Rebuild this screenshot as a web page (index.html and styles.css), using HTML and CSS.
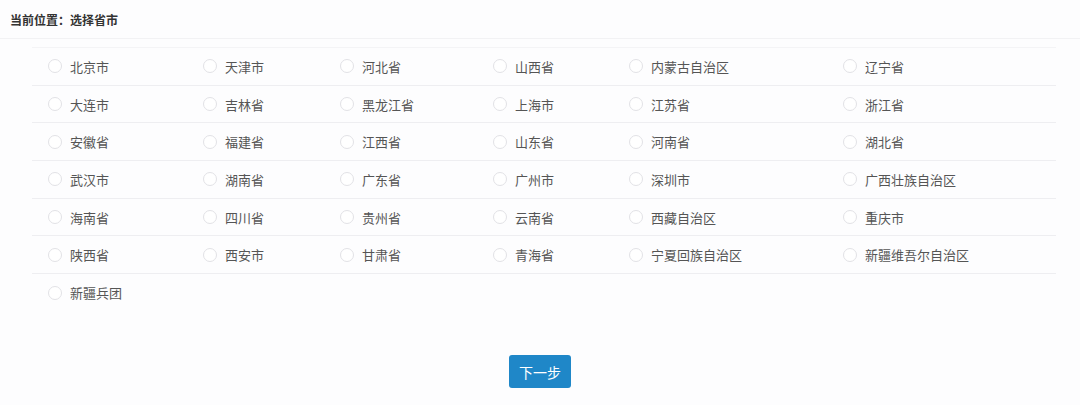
FILE: index.html
```html
<!DOCTYPE html>
<html lang="zh-CN">
<head>
    <meta charset="UTF-8">
    <meta name="viewport" content="width=device-width, initial-scale=1.0">
    <title>选择省市</title>
    <link rel="stylesheet" href="styles.css">
</head>
<body>
    <!-- Breadcrumb -->
    <div class="crumb">当前位置：选择省市</div>

    <!-- Province list -->
    <table class="area-table">
        <tr>
            <td><label><span class="radio"></span>北京市</label></td>
            <td><label><span class="radio"></span>天津市</label></td>
            <td><label><span class="radio"></span>河北省</label></td>
            <td><label><span class="radio"></span>山西省</label></td>
            <td><label><span class="radio"></span>内蒙古自治区</label></td>
            <td><label><span class="radio"></span>辽宁省</label></td>
        </tr>
        <tr>
            <td><label><span class="radio"></span>大连市</label></td>
            <td><label><span class="radio"></span>吉林省</label></td>
            <td><label><span class="radio"></span>黑龙江省</label></td>
            <td><label><span class="radio"></span>上海市</label></td>
            <td><label><span class="radio"></span>江苏省</label></td>
            <td><label><span class="radio"></span>浙江省</label></td>
        </tr>
        <tr>
            <td><label><span class="radio"></span>安徽省</label></td>
            <td><label><span class="radio"></span>福建省</label></td>
            <td><label><span class="radio"></span>江西省</label></td>
            <td><label><span class="radio"></span>山东省</label></td>
            <td><label><span class="radio"></span>河南省</label></td>
            <td><label><span class="radio"></span>湖北省</label></td>
        </tr>
        <tr>
            <td><label><span class="radio"></span>武汉市</label></td>
            <td><label><span class="radio"></span>湖南省</label></td>
            <td><label><span class="radio"></span>广东省</label></td>
            <td><label><span class="radio"></span>广州市</label></td>
            <td><label><span class="radio"></span>深圳市</label></td>
            <td><label><span class="radio"></span>广西壮族自治区</label></td>
        </tr>
        <tr>
            <td><label><span class="radio"></span>海南省</label></td>
            <td><label><span class="radio"></span>四川省</label></td>
            <td><label><span class="radio"></span>贵州省</label></td>
            <td><label><span class="radio"></span>云南省</label></td>
            <td><label><span class="radio"></span>西藏自治区</label></td>
            <td><label><span class="radio"></span>重庆市</label></td>
        </tr>
        <tr>
            <td><label><span class="radio"></span>陕西省</label></td>
            <td><label><span class="radio"></span>西安市</label></td>
            <td><label><span class="radio"></span>甘肃省</label></td>
            <td><label><span class="radio"></span>青海省</label></td>
            <td><label><span class="radio"></span>宁夏回族自治区</label></td>
            <td><label><span class="radio"></span>新疆维吾尔自治区</label></td>
        </tr>
        <tr>
            <td><label><span class="radio"></span>新疆兵团</label></td>
            <td></td><td></td><td></td><td></td><td></td>
        </tr>
    </table>

    <div class="actions">
        <button type="button">下一步</button>
    </div>
</body>
</html>
```

FILE: styles.css
```css
body {
    margin: 0;
    background: #fdfdfe;
    font-family: "Noto Sans CJK SC", "Liberation Sans", sans-serif;
    color: #555;
}
.crumb {
    padding: 11px 10px 10px;
    font-size: 12px;
    font-weight: bold;
    color: #333;
    border-bottom: 1px solid #f2f2f4;
}
.area-table {
    width: 1024px;
    margin: 8px 0 0 32px;
    border-collapse: collapse;
    font-size: 13px;
}
.area-table tr {
    height: 37.7px;
    border-top: 1px solid #eeeef1;
}
.area-table tr:first-child {
    border-top-color: #f4f4f6;
}
.area-table td {
    padding: 0 0 0 16px;
    vertical-align: middle;
}
.area-table td:nth-child(1) { width: 139px; }
.area-table td:nth-child(2) { width: 121px; }
.area-table td:nth-child(3) { width: 137px; }
.area-table td:nth-child(4) { width: 120px; }
.area-table td:nth-child(5) { width: 198px; }
label {
    display: flex;
    align-items: center;
    gap: 8px;
    cursor: pointer;
    white-space: nowrap;
}
.radio {
    width: 12px;
    height: 12px;
    border: 1px solid #e2e2e6;
    border-radius: 50%;
    background: #fff;
}
.actions {
    display: flex;
    justify-content: center;
    padding: 44px 0 0;
}
button {
    width: 62px;
    height: 33px;
    padding: 0;
    background: #1f87c8;
    color: #fff;
    font-family: inherit;
    font-size: 14px;
    border: none;
    border-radius: 3px;
    cursor: pointer;
}
button:hover {
    background: #176da3;
}
```
